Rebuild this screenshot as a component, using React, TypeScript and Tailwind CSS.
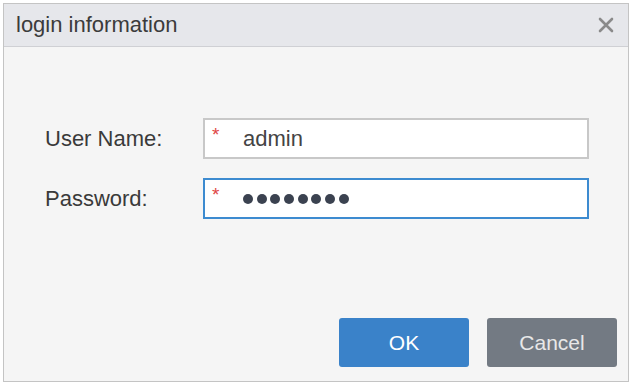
import React from 'react';

const CloseIcon: React.FC = () => (
  <svg viewBox="0 0 16 16" className="w-[16px] h-[16px]" aria-hidden="true">
    <path d="M2 2 L14 14 M14 2 L2 14" stroke="#8a8a8a" strokeWidth="2.6" strokeLinecap="round" fill="none" />
  </svg>
);

const Field: React.FC<{ label: string; focused?: boolean; children: React.ReactNode }> = ({ label, focused, children }) => (
  <div className="flex items-center">
    <div className="w-[199px] pl-[41px] text-[22px] text-[#3a3a3a] leading-none whitespace-nowrap">{label}</div>
    <div
      className={`relative w-[386px] h-[41px] bg-white flex items-center pl-[38px] border-2 ${
        focused ? 'border-[#3d8bd0]' : 'border-[#c8c8c8]'
      }`}
    >
      <span className="absolute left-[7px] top-[5px] text-[#e04545] text-[19px] leading-none">*</span>
      {children}
    </div>
  </div>
);

export default function App() {
  return (
    <div className="w-[632px] h-[384px] bg-white pt-[3px] pl-[3px]" style={{ fontFamily: '"Liberation Sans", Arial, sans-serif' }}>
      <div className="w-[626px] h-[379px] border border-[#c4c4c4] bg-[#f5f5f5] flex flex-col">
        {/* Barra de título */}
        <div className="h-[43px] bg-[#e6e7eb] border-b border-[#cfd0d4] flex items-center justify-between pl-[12px] pr-[14px]">
          <span className="text-[22px] text-[#3b3b3b] leading-none">login information</span>
          <CloseIcon />
        </div>

        {/* Campos */}
        <div className="flex flex-col gap-[19px] pt-[71px]">
          <Field label="User Name:">
            <span className="text-[22px] text-[#444] leading-none">admin</span>
          </Field>
          <Field label="Password:" focused>
            <div className="flex gap-[3.7px] pt-[1px]">
              {Array.from({ length: 8 }).map((_, i) => (
                <span key={i} className="w-[10px] h-[10px] rounded-full bg-[#3b4250]" />
              ))}
            </div>
          </Field>
        </div>

        {/* Botões */}
        <div className="mt-auto flex justify-end gap-[18px] pr-[11px] pb-[14px]">
          <button className="w-[130px] h-[49px] rounded-[3px] bg-[#3a82c9] text-white text-[21px]">OK</button>
          <button className="w-[130px] h-[49px] rounded-[3px] bg-[#737a83] text-[#e8e8e8] text-[21px]">Cancel</button>
        </div>
      </div>
    </div>
  );
}
